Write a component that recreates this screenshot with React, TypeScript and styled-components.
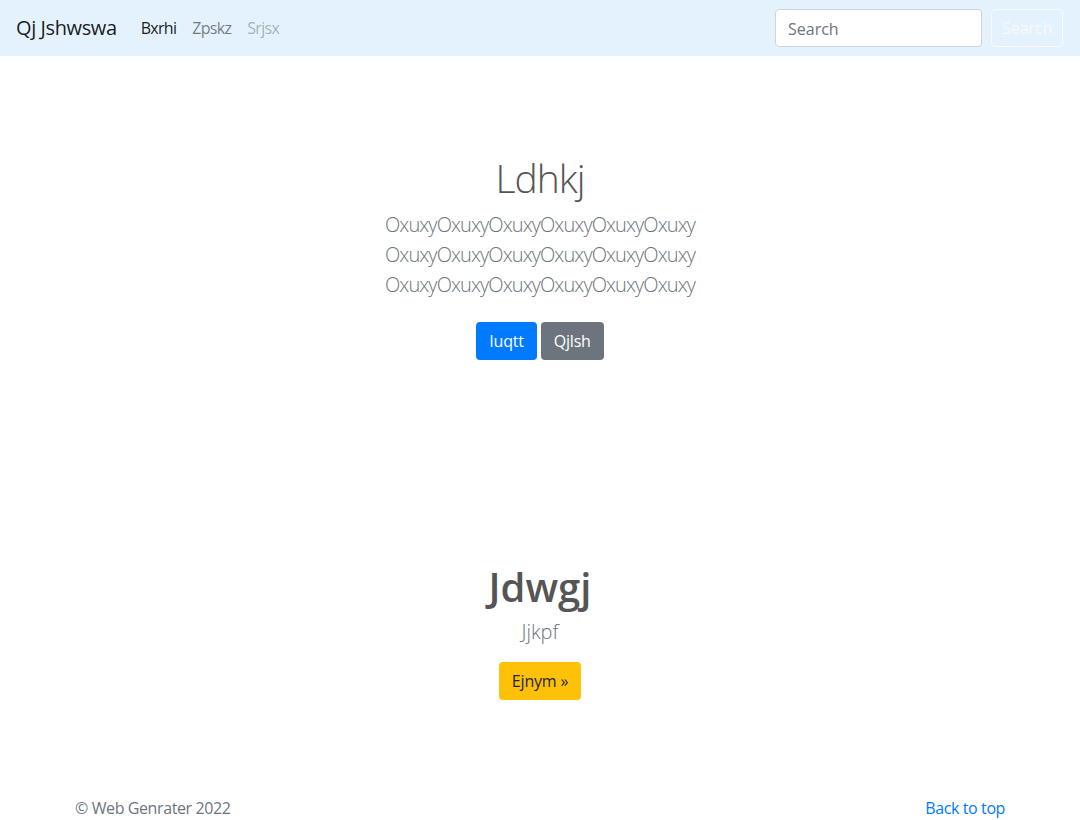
import React from "react";
import styled, { createGlobalStyle } from "styled-components";

const Global = createGlobalStyle`
  * { box-sizing: border-box; }
  body {
    margin: 0;
    font-family: "Open Sans", "Noto Sans", sans-serif;
    font-size: 16px;
    line-height: 1.5;
    color: #212529;
    background: #fff;
  }
`;

const Navbar = styled.nav`
  display: flex;
  align-items: center;
  justify-content: space-between;
  height: 56px;
  padding: 8px 16px;
  background: #e3f2fd;
`;

const Left = styled.div`
  display: flex;
  align-items: center;
`;

const Brand = styled.a`
  font-size: 20px;
  line-height: 30px;
  color: rgba(0, 0, 0, 0.9);
  margin-right: 16px;
  text-decoration: none;
  letter-spacing: -0.4px;
`;

const NavList = styled.div`
  display: flex;
`;

const NavLink = styled.a<{ $state: "active" | "normal" | "disabled" }>`
  padding: 8px;
  font-size: 16px;
  line-height: 24px;
  text-decoration: none;
  letter-spacing: -0.7px;
  color: ${(p) =>
    p.$state === "active"
      ? "rgba(0,0,0,0.9)"
      : p.$state === "normal"
      ? "rgba(0,0,0,0.5)"
      : "rgba(0,0,0,0.3)"};
`;

const SearchForm = styled.form`
  display: flex;
  align-items: center;
  gap: 9px;
`;

const SearchInput = styled.input`
  width: 207px;
  height: 38px;
  padding: 7px 12px 5px;
  font-family: inherit;
  font-size: 16px;
  color: #495057;
  border: 1px solid #ced4da;
  border-radius: 4px;
  background: #fff;
  &::placeholder { color: #6c757d; }
`;

const OutlineButton = styled.button`
  width: 72px;
  height: 38px;
  font-family: inherit;
  font-size: 16px;
  color: #f8f9fa;
  background: transparent;
  border: 1px solid #f8f9fa;
  border-radius: 4px;
  padding: 0;
  margin-right: 1px;
`;

const Hero = styled.section`
  padding: 98px 0 96px;
  text-align: center;
`;

const HeroTitle = styled.h1`
  margin: 0 0 8px;
  font-size: 39px;
  font-weight: 300;
  line-height: 48px;
  color: #555;
  letter-spacing: -1px;
`;

const Lead = styled.p`
  margin: 0 0 16px;
  font-size: 20px;
  font-weight: 300;
  line-height: 30px;
  color: #6c757d;
  letter-spacing: -0.9px;
`;

const ButtonRow = styled.p`
  margin: 0;
  display: flex;
  justify-content: center;
  gap: 4px;
  padding: 6px 0;
`;

const Btn = styled.a<{ $variant: "primary" | "secondary" | "warning" }>`
  display: inline-flex;
  align-items: center;
  height: 38px;
  padding: 0 13px;
  font-size: 16px;
  border-radius: 4px;
  text-decoration: none;
  letter-spacing: -0.2px;
  background: ${(p) =>
    p.$variant === "primary" ? "#007bff" : p.$variant === "secondary" ? "#6c757d" : "#ffc107"};
  color: ${(p) => (p.$variant === "warning" ? "#212529" : "#fff")};
`;

const Feature = styled.section`
  padding-top: 101px;
  text-align: center;
`;

const FeatureTitle = styled.h2`
  margin: 0 0 6px;
  font-size: 40px;
  font-weight: 600;
  line-height: 48px;
  color: #555;
  letter-spacing: 0px;
`;

const SubLead = styled.p`
  margin: 0 0 15px;
  font-size: 20px;
  font-weight: 300;
  line-height: 30px;
  color: #6c757d;
`;

const Footer = styled.footer`
  width: 960px;
  margin: 96px auto 0;
  padding: 0 15px;
  display: flex;
  justify-content: space-between;
  font-size: 16px;
  line-height: 24px;
  color: #6c757d;
  letter-spacing: -0.4px;
`;

const FooterLink = styled.a`
  color: #007bff;
  text-decoration: none;
`;

export default function App() {
  return (
    <>
      <Global />
      <Navbar>
        <Left>
          <Brand href="#">Qj Jshwswa</Brand>
          <NavList>
            <NavLink $state="active" href="#">Bxrhi</NavLink>
            <NavLink $state="normal" href="#">Zpskz</NavLink>
            <NavLink $state="disabled" href="#">Srjsx</NavLink>
          </NavList>
        </Left>
        <SearchForm onSubmit={(e) => e.preventDefault()}>
          <SearchInput placeholder="Search" />
          <OutlineButton type="submit">Search</OutlineButton>
        </SearchForm>
      </Navbar>
      <Hero>
        <HeroTitle>Ldhkj</HeroTitle>
        <Lead>
          OxuxyOxuxyOxuxyOxuxyOxuxyOxuxy
          <br />
          OxuxyOxuxyOxuxyOxuxyOxuxyOxuxy
          <br />
          OxuxyOxuxyOxuxyOxuxyOxuxyOxuxy
        </Lead>
        <ButtonRow>
          <Btn $variant="primary" href="#">Iuqtt</Btn>
          <Btn $variant="secondary" href="#">Qjlsh</Btn>
        </ButtonRow>
      </Hero>
      <Feature>
        <FeatureTitle>Jdwgj</FeatureTitle>
        <SubLead>Jjkpf</SubLead>
        <Btn $variant="warning" href="#">Ejnym »</Btn>
      </Feature>
      <Footer>
        <span>© Web Genrater 2022</span>
        <FooterLink href="#">Back to top</FooterLink>
      </Footer>
    </>
  );
}
